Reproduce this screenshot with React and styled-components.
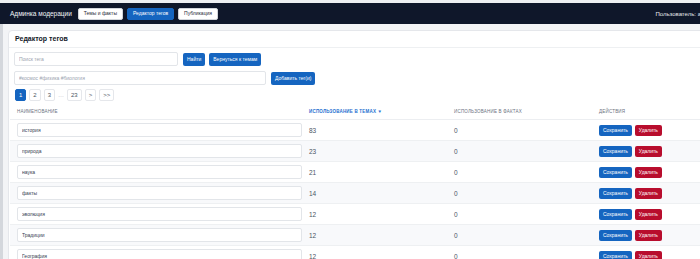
import React, { useState } from "react";
import styled, { createGlobalStyle } from "styled-components";

const GlobalStyle = createGlobalStyle`
  html, body {
    margin: 0;
    padding: 0;
    background: #f3f4f6;
    overflow: hidden;
  }
  body {
    font-family: "Liberation Sans", Arial, sans-serif;
    color: #1f2937;
  }
  * {
    box-sizing: border-box;
  }
`;

const tags = [
  { name: "история", themes: 83, facts: 0 },
  { name: "природа", themes: 23, facts: 0 },
  { name: "наука", themes: 21, facts: 0 },
  { name: "факты", themes: 14, facts: 0 },
  { name: "эволюция", themes: 12, facts: 0 },
  { name: "Традиции", themes: 12, facts: 0 },
  { name: "География", themes: 12, facts: 0 },
];

const App = () => {
  const [search, setSearch] = useState("");
  const [newTags, setNewTags] = useState("");
  const [names, setNames] = useState(tags.map((t) => t.name));

  return (
    <>
      <GlobalStyle />
      <Frame>
        <Navbar>
          <Brand>Админка модерации</Brand>
          <NavButton>Темы и факты</NavButton>
          <NavButton $active>Редактор тегов</NavButton>
          <NavButton>Публикация</NavButton>
          <UserInfo>Пользователь: admin</UserInfo>
        </Navbar>
        <Page>
          <Card>
            <CardHeader>Редактор тегов</CardHeader>
            <CardBody>
              <ToolRow>
                <Input
                  $width={164}
                  placeholder="Поиск тега"
                  value={search}
                  onChange={(e) => setSearch(e.target.value)}
                />
                <Button>Найти</Button>
                <Button>Вернуться к темам</Button>
              </ToolRow>
              <ToolRow>
                <Input
                  $width={252}
                  placeholder="#космос #физика #биология"
                  value={newTags}
                  onChange={(e) => setNewTags(e.target.value)}
                />
                <Button>Добавить тег(и)</Button>
              </ToolRow>
              <Pager>
                <PageButton $active>1</PageButton>
                <PageButton>2</PageButton>
                <PageButton>3</PageButton>
                <Dots>…</Dots>
                <PageButton>23</PageButton>
                <PageButton>&gt;</PageButton>
                <PageButton>&gt;&gt;</PageButton>
              </Pager>
              <Table>
                <HeadRow>
                  <HeadCell>Наименование</HeadCell>
                  <HeadCell $sorted>Использование в темах ▼</HeadCell>
                  <HeadCell>Использование в фактах</HeadCell>
                  <HeadCell>Действия</HeadCell>
                </HeadRow>
                {tags.map((t, i) => (
                  <Row key={i} $striped={i % 2 === 1}>
                    <NameCell>
                      <RowInput
                        value={names[i]}
                        onChange={(e) => {
                          const next = [...names];
                          next[i] = e.target.value;
                          setNames(next);
                        }}
                      />
                    </NameCell>
                    <Cell>{t.themes}</Cell>
                    <Cell>{t.facts}</Cell>
                    <Cell>
                      <Actions>
                        <SmallButton>Сохранить</SmallButton>
                        <SmallButton $danger>Удалить</SmallButton>
                      </Actions>
                    </Cell>
                  </Row>
                ))}
              </Table>
            </CardBody>
          </Card>
        </Page>
      </Frame>
    </>
  );
};

const Frame = styled.div`
  width: 770px;
  border-top: 3px solid #eef0f3;
`;

const Navbar = styled.div`
  height: 21px;
  background: #0f172a;
  display: flex;
  align-items: center;
  padding-left: 10px;
  gap: 4px;
`;

const Brand = styled.div`
  color: #f1f5f9;
  font-size: 6.5px;
  margin-right: 2px;
  white-space: nowrap;
`;

const NavButton = styled.button`
  height: 12px;
  padding: 0 5px;
  border-radius: 2px;
  border: 1px solid ${(p) => (p.$active ? "#1565c0" : "#d1d5db")};
  background: ${(p) => (p.$active ? "#1565c0" : "#ffffff")};
  color: ${(p) => (p.$active ? "#ffffff" : "#1f2937")};
  font-family: inherit;
  font-size: 5px;
  line-height: 1;
  cursor: pointer;
`;

const UserInfo = styled.div`
  margin-left: auto;
  margin-right: 56px;
  color: #e5e7eb;
  font-size: 6px;
  white-space: nowrap;
`;

const Page = styled.div`
  border-left: 3px solid #d4d7dc;
  padding: 6px 0 0 5px;
  min-height: 240px;
`;

const Card = styled.div`
  background: #ffffff;
  border: 1px solid #e5e7eb;
  border-radius: 4px;
`;

const CardHeader = styled.div`
  height: 17px;
  line-height: 16px;
  padding-left: 6px;
  font-size: 7px;
  font-weight: 700;
  color: #111827;
  border-bottom: 1px solid #eef0f2;
`;

const CardBody = styled.div`
  padding: 4px 5px 0;
  display: flex;
  flex-direction: column;
`;

const ToolRow = styled.div`
  display: flex;
  align-items: center;
  gap: 4px;
  margin-bottom: 5px;
`;

const Input = styled.input`
  width: ${(p) => p.$width}px;
  height: 14px;
  border: 1px solid #e2e5e9;
  border-radius: 2px;
  padding: 0 4px;
  font-family: inherit;
  font-size: 5px;
  color: #374151;
  outline: none;
  margin-right: 1px;
  &::placeholder {
    color: #9ca3af;
  }
`;

const Button = styled.button`
  height: 13px;
  padding: 0 4px;
  border: none;
  border-radius: 2px;
  background: #1565c0;
  color: #ffffff;
  font-family: inherit;
  font-size: 5px;
  line-height: 1;
  cursor: pointer;
`;

const Pager = styled.div`
  display: flex;
  align-items: center;
  gap: 3px;
  padding-left: 1px;
  margin-top: -1px;
`;

const PageButton = styled.button`
  min-width: 11px;
  height: 12px;
  padding: 0 3px;
  border-radius: 2px;
  border: 1px solid ${(p) => (p.$active ? "#1565c0" : "#e5e7eb")};
  background: ${(p) => (p.$active ? "#1565c0" : "#ffffff")};
  color: ${(p) => (p.$active ? "#ffffff" : "#4b5563")};
  font-family: inherit;
  font-size: 6px;
  line-height: 1;
  cursor: pointer;
`;

const Dots = styled.span`
  color: #9ca3af;
  font-size: 6px;
`;

const Table = styled.div`
  margin: 3px 0 0 -4px;
`;

const gridColumns = "292px 145px 145px 1fr";

const HeadRow = styled.div`
  display: grid;
  grid-template-columns: ${gridColumns};
  height: 16px;
  align-items: center;
  border-bottom: 1px solid #eceef1;
`;

const HeadCell = styled.div`
  padding-left: 7px;
  font-size: 4.5px;
  letter-spacing: 0.2px;
  text-transform: uppercase;
  color: ${(p) => (p.$sorted ? "#1d6fd0" : "#6b7280")};
  font-weight: ${(p) => (p.$sorted ? 700 : 400)};
  white-space: nowrap;
`;

const Row = styled.div`
  display: grid;
  grid-template-columns: ${gridColumns};
  height: 21px;
  align-items: center;
  background: ${(p) => (p.$striped ? "#f8f9fb" : "#ffffff")};
  border-bottom: 1px solid #eef0f2;
`;

const Cell = styled.div`
  padding-left: 7px;
  font-size: 6.5px;
  color: #4b5563;
`;

const NameCell = styled.div`
  padding-left: 7px;
`;

const RowInput = styled.input`
  width: 100%;
  height: 14px;
  border: 1px solid #e2e5e9;
  border-radius: 2px;
  padding: 0 4px;
  font-family: inherit;
  font-size: 5px;
  color: #374151;
  background: #ffffff;
  outline: none;
  display: block;
`;

const Actions = styled.div`
  display: flex;
  gap: 3px;
`;

const SmallButton = styled.button`
  height: 11px;
  padding: 0 4px;
  border: none;
  border-radius: 2px;
  background: ${(p) => (p.$danger ? "#b80d2d" : "#1565c0")};
  color: #ffffff;
  font-family: inherit;
  font-size: 5px;
  line-height: 1;
  cursor: pointer;
`;

export default App;
